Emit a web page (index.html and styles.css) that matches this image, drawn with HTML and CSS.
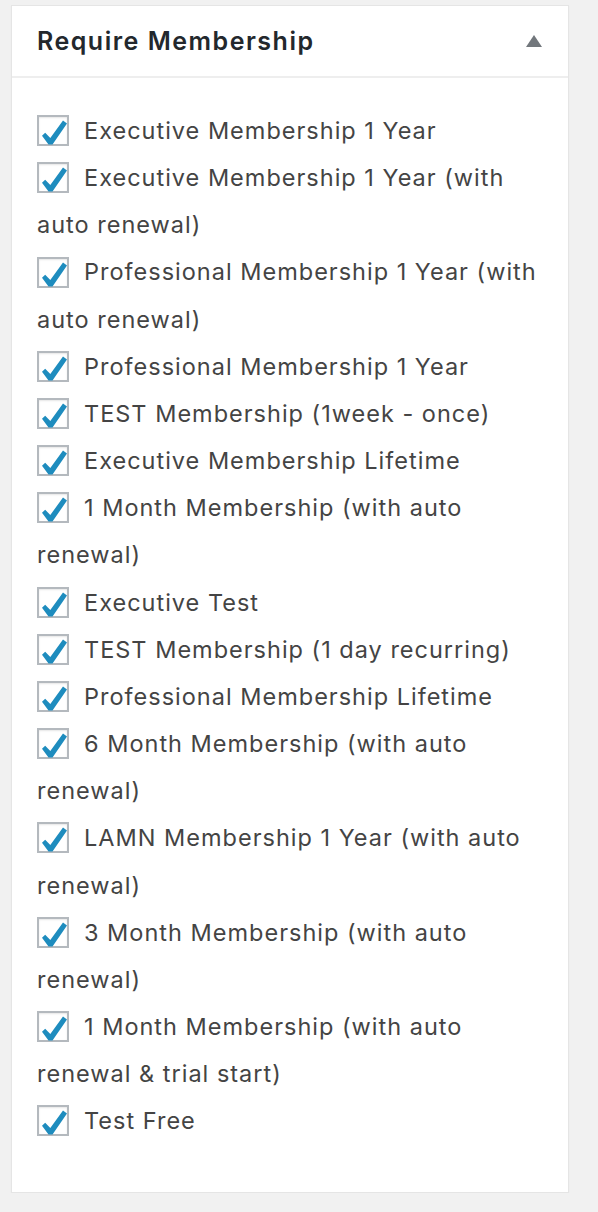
FILE: index.html
```html
<!DOCTYPE html>
<html lang="en">
<head>
  <meta charset="UTF-8">
  <meta name="viewport" content="width=device-width, initial-scale=1.0">
  <title>Require Membership</title>
  <link rel="stylesheet" href="styles.css">
</head>
<body>
  <div class="postbox">
    <div class="postbox-header">
      <h2>Require Membership</h2>
      <button class="toggle" type="button" aria-label="Toggle panel">
        <svg width="16" height="12" viewBox="0 0 16 12"><polygon points="8,0 16,12 0,12" fill="#72777c"/></svg>
      </button>
    </div>

    <ul class="checklist">
      <li><span class="check"><svg viewBox="0 0 28 27"><polygon points="24,3.5 28,6.5 13.5,27.5 9.5,27.5 3,18.8 6.2,15.8 11.3,21"/></svg></span><span>Executive Membership 1 Year</span></li>
      <li><span class="check"><svg viewBox="0 0 28 27"><polygon points="24,3.5 28,6.5 13.5,27.5 9.5,27.5 3,18.8 6.2,15.8 11.3,21"/></svg></span><span>Executive Membership 1 Year (with auto renewal)</span></li>
      <li><span class="check"><svg viewBox="0 0 28 27"><polygon points="24,3.5 28,6.5 13.5,27.5 9.5,27.5 3,18.8 6.2,15.8 11.3,21"/></svg></span><span>Professional Membership 1 Year (with auto renewal)</span></li>
      <li><span class="check"><svg viewBox="0 0 28 27"><polygon points="24,3.5 28,6.5 13.5,27.5 9.5,27.5 3,18.8 6.2,15.8 11.3,21"/></svg></span><span>Professional Membership 1 Year</span></li>
      <li><span class="check"><svg viewBox="0 0 28 27"><polygon points="24,3.5 28,6.5 13.5,27.5 9.5,27.5 3,18.8 6.2,15.8 11.3,21"/></svg></span><span>TEST Membership (1week - once)</span></li>
      <li><span class="check"><svg viewBox="0 0 28 27"><polygon points="24,3.5 28,6.5 13.5,27.5 9.5,27.5 3,18.8 6.2,15.8 11.3,21"/></svg></span><span>Executive Membership Lifetime</span></li>
      <li><span class="check"><svg viewBox="0 0 28 27"><polygon points="24,3.5 28,6.5 13.5,27.5 9.5,27.5 3,18.8 6.2,15.8 11.3,21"/></svg></span><span>1 Month Membership (with auto renewal)</span></li>
      <li><span class="check"><svg viewBox="0 0 28 27"><polygon points="24,3.5 28,6.5 13.5,27.5 9.5,27.5 3,18.8 6.2,15.8 11.3,21"/></svg></span><span>Executive Test</span></li>
      <li><span class="check"><svg viewBox="0 0 28 27"><polygon points="24,3.5 28,6.5 13.5,27.5 9.5,27.5 3,18.8 6.2,15.8 11.3,21"/></svg></span><span>TEST Membership (1 day recurring)</span></li>
      <li><span class="check"><svg viewBox="0 0 28 27"><polygon points="24,3.5 28,6.5 13.5,27.5 9.5,27.5 3,18.8 6.2,15.8 11.3,21"/></svg></span><span>Professional Membership Lifetime</span></li>
      <li><span class="check"><svg viewBox="0 0 28 27"><polygon points="24,3.5 28,6.5 13.5,27.5 9.5,27.5 3,18.8 6.2,15.8 11.3,21"/></svg></span><span>6 Month Membership (with auto renewal)</span></li>
      <li><span class="check"><svg viewBox="0 0 28 27"><polygon points="24,3.5 28,6.5 13.5,27.5 9.5,27.5 3,18.8 6.2,15.8 11.3,21"/></svg></span><span>LAMN Membership 1 Year (with auto renewal)</span></li>
      <li><span class="check"><svg viewBox="0 0 28 27"><polygon points="24,3.5 28,6.5 13.5,27.5 9.5,27.5 3,18.8 6.2,15.8 11.3,21"/></svg></span><span>3 Month Membership (with auto renewal)</span></li>
      <li><span class="check"><svg viewBox="0 0 28 27"><polygon points="24,3.5 28,6.5 13.5,27.5 9.5,27.5 3,18.8 6.2,15.8 11.3,21"/></svg></span><span>1 Month Membership (with auto renewal &amp; trial start)</span></li>
      <li><span class="check"><svg viewBox="0 0 28 27"><polygon points="24,3.5 28,6.5 13.5,27.5 9.5,27.5 3,18.8 6.2,15.8 11.3,21"/></svg></span><span>Test Free</span></li>
    </ul>
  </div>
</body>
</html>
```

FILE: styles.css
```css
body {
  margin: 0;
  padding: 5px 0 0 11px;
  background-color: #f1f1f1;
  font-family: Inter, 'Liberation Sans', sans-serif;
  color: #444;
}
.postbox {
  width: 556px;
  background-color: white;
  border: 1px solid #e5e5e5;
  box-shadow: 0 1px 1px rgba(0,0,0,0.06);
}
.postbox-header {
  display: flex;
  align-items: center;
  justify-content: space-between;
  height: 70px;
  padding: 0 26px 0 25px;
  border-bottom: 2px solid #eeeeee;
}
.postbox-header h2 {
  margin: 0;
  font-size: 25px;
  font-weight: 600;
  letter-spacing: 1.5px;
  color: #23282d;
}
.toggle {
  background: none;
  border: none;
  padding: 0;
  display: flex;
  cursor: pointer;
}
.checklist {
  list-style: none;
  margin: 0;
  padding: 29px 22px 48px 25px;
  font-size: 23.5px;
  letter-spacing: 1px;
  line-height: 47.15px;
}
.check {
  display: inline-block;
  box-sizing: border-box;
  width: 32px;
  height: 31px;
  margin-right: 15px;
  vertical-align: middle;
  position: relative;
  top: -2px;
  border: 2px solid #b4b9be;
  box-shadow: inset 0 1px 2px rgba(0,0,0,0.1);
  background-color: white;
}
.check svg {
  display: block;
  width: 28px;
  height: 27px;
  overflow: visible;
  fill: #1e8cbe;
}
```
